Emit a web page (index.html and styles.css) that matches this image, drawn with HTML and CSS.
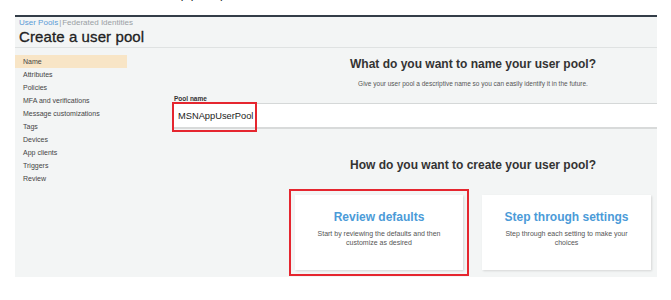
FILE: index.html
```html
<!DOCTYPE html>
<html>
<head>
<meta charset="utf-8">
<link rel="stylesheet" href="styles.css">
</head>
<body>
<div class="frag"><span class="frag-text">up pool, p</span></div>
<div class="panel">
  <div class="head">
    <div class="crumbs"><a class="crumb-link">User Pools</a><span class="bar">|</span><span class="crumb-cur">Federated Identities</span></div>
    <h1 class="title">Create a user pool</h1>
  </div>
  <div class="body">
    <ul class="nav">
      <li class="nav-item active">Name</li>
      <li class="nav-item">Attributes</li>
      <li class="nav-item">Policies</li>
      <li class="nav-item">MFA and verifications</li>
      <li class="nav-item">Message customizations</li>
      <li class="nav-item">Tags</li>
      <li class="nav-item">Devices</li>
      <li class="nav-item">App clients</li>
      <li class="nav-item">Triggers</li>
      <li class="nav-item">Review</li>
    </ul>
    <div class="main">
      <div class="center">
        <h2 class="q">What do you want to name your user pool?</h2>
        <p class="hint">Give your user pool a descriptive name so you can easily identify it in the future.</p>
      </div>
      <label class="label">Pool name</label>
      <div class="field">
        <span class="value">MSNAppUserPool</span>
        <span class="mark mark-input"></span>
      </div>
      <div class="center">
        <h2 class="q q2">How do you want to create your user pool?</h2>
      </div>
      <div class="cards">
        <div class="card-wrap marked">
          <div class="card">
            <div class="card-title">Review defaults</div>
            <div class="card-desc">Start by reviewing the defaults and then customize as desired</div>
          </div>
        </div>
        <div class="card-wrap">
          <div class="card">
            <div class="card-title">Step through settings</div>
            <div class="card-desc">Step through each setting to make your choices</div>
          </div>
        </div>
      </div>
    </div>
  </div>
</div>
</body>
</html>
```
FILE: styles.css
```css
* { box-sizing: border-box; }
html, body { margin: 0; padding: 0; background: #fff; }
body { font-family: "Liberation Sans", Arial, sans-serif; color: #333; width: 671px; height: 300px; overflow: hidden; }

.frag { height: 15px; overflow: hidden; padding-left: 174px; }
.frag-text { display: block; font-size: 12px; line-height: 12px; margin-top: -12px; color: #222; }

.panel {
  margin-left: 15px;
  width: 642px;
  height: 262px;
  background: #f3f5f5;
  border-top: 2px solid #333d48;
}

.head { padding: 1px 0 0 4px; border-bottom: 1px solid #dfe2e2; height: 31px; }
.crumbs { font-size: 8px; line-height: 10px; color: #9aa0a4; }
.crumb-link { color: #5b9bd5; }
.bar { color: #9aa0a4; margin: 0 1px; }
.title { margin: 0; font-size: 15px; line-height: 17px; font-weight: normal; color: #222; letter-spacing: 0.1px; -webkit-text-stroke: 0.3px #222; }

.body { display: flex; }
.nav { list-style: none; margin: 0; padding: 7px 0 0 0; width: 112px; flex: none; }
.nav-item { font-size: 7px; line-height: 13px; height: 13px; padding-left: 8px; color: #444; }
.nav-item.active { background: #f8e5c6; }

.main { flex: 1; padding-left: 45px; }
.center { margin-left: 117px; text-align: center; }
.q { margin: 0; padding-top: 8px; font-size: 12px; line-height: 16px; font-weight: bold; color: #333; }
.hint { margin: 8px 0 0; font-size: 6.5px; line-height: 8px; color: #555; }
.label { display: block; margin-top: 7px; padding-left: 2px; font-size: 6.5px; line-height: 8px; font-weight: bold; color: #333; }
.field {
  position: relative;
  margin-top: 0;
  height: 26px;
  background: #fff;
  border-top: 1px solid #d5d8d8;
  border-bottom: 2px solid #d8dada;
  display: flex; align-items: center;
  padding-left: 6px;
  font-size: 9.3px; color: #222;
}
.mark { position: absolute; border: 2px solid #e5262f; }
.mark-input { left: 0; top: -2px; width: 85px; height: 30px; }

.q2 { padding-top: 28px; }

.cards { display: flex; gap: 5px; margin-left: 117px; margin-top: 16px; }
.card-wrap { padding: 4px; border: 2px solid transparent; width: 180px; }
.card-wrap.marked { border-color: #e5262f; }
.card {
  background: #fff;
  height: 75px;
  box-shadow: 1px 1px 2px rgba(0,0,0,0.12);
  text-align: center;
  padding-top: 15px;
}
.card-wrap + .card-wrap .card { width: 169px; margin-left: 2px; }
.card-title { font-size: 12px; line-height: 14px; font-weight: bold; color: #4b9bd8; }
.card-desc { margin: 5px auto 0; width: 132px; font-size: 7px; line-height: 9px; color: #555; }
```
